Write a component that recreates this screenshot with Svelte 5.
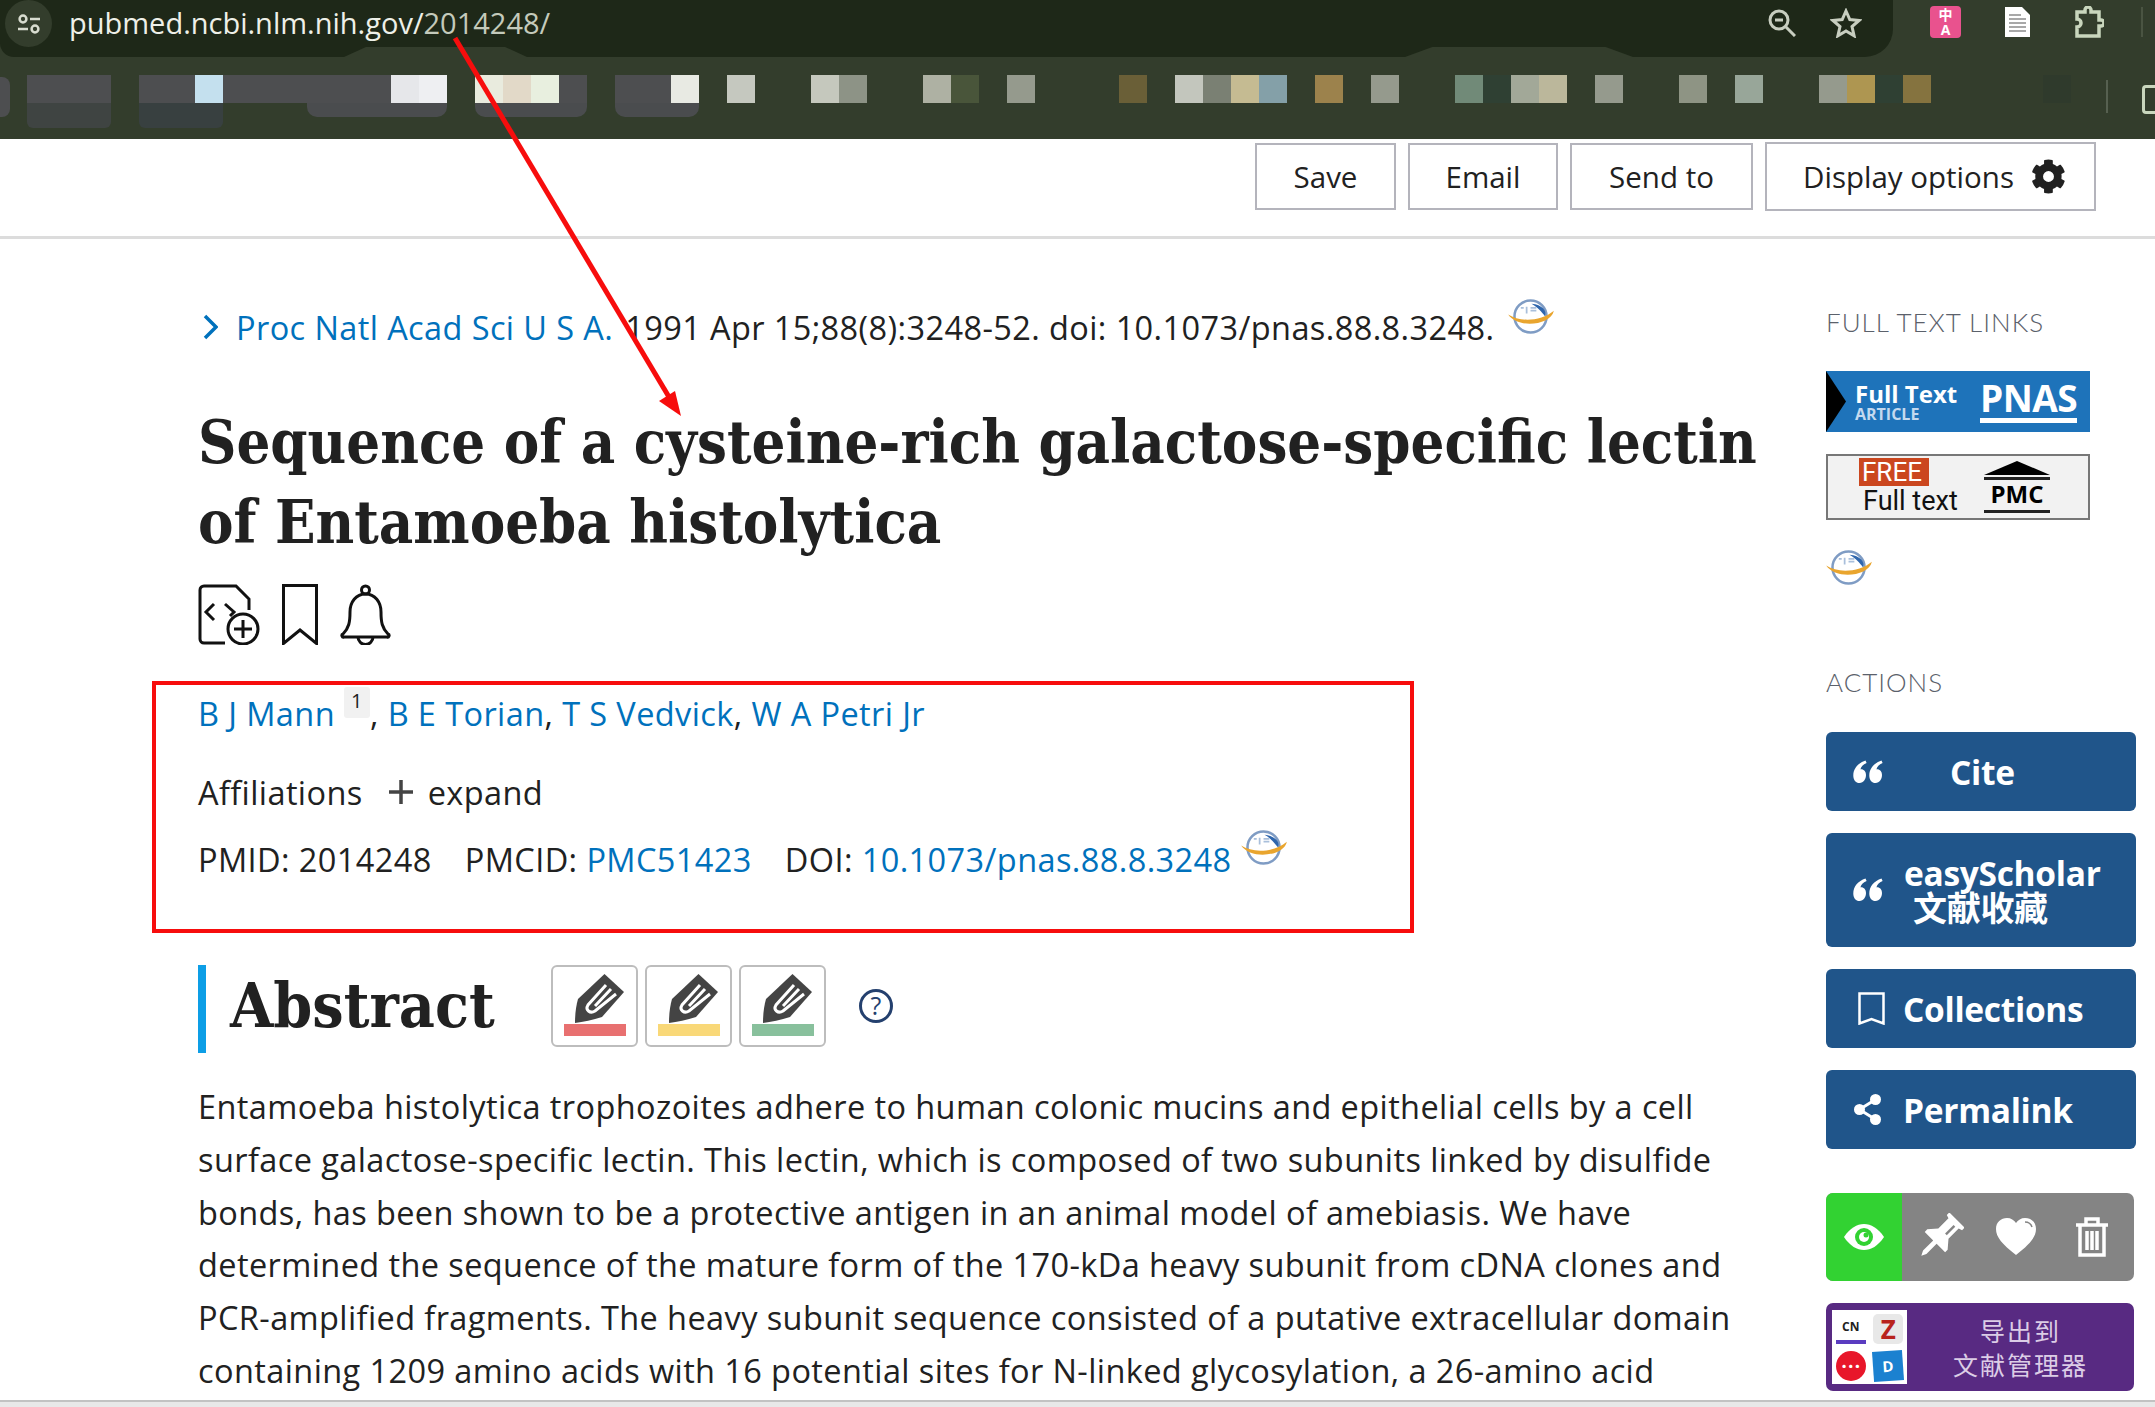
<script>
  const tiles = [
    [1,3,'#4d4e50'],[5,2,'#4d4e50'],[7,1,'#c4e0ee'],[8,6,'#4d4e50'],[14,1,'#e6e7ea'],[15,1,'#eeeff2'],
    [17,1,'#e9ebde'],[18,1,'#e2d9c8'],[19,1,'#e8efdf'],[20,1,'#4d4e50'],[22,2,'#4d4e50'],[24,1,'#e8eae3'],[26,1,'#c5c8bf'],
    [29,1,'#c5c8bd'],[30,1,'#8d9386'],[33,1,'#aeb1a3'],[34,1,'#49553a'],[36,1,'#959a8d'],
    [40,1,'#6a5f37'],[42,1,'#c3c6bd'],[43,1,'#7a8073'],[44,1,'#c5bb92'],[45,1,'#84a0a8'],[47,1,'#9c824c'],[49,1,'#959a8d'],
    [52,1,'#718a78'],[53,1,'#2f4033'],[54,1,'#a2a898'],[55,1,'#bbb79b'],[57,1,'#959a8d'],[60,1,'#8e9484'],[62,1,'#98a699'],
    [65,1,'#959a8d'],[66,1,'#ae9651'],[67,1,'#2f4033'],[68,1,'#85733f'],[73,1,'#2f3a2c']
  ];
  const dims = [[1,3,'#3f4442',2],[5,3,'#384040',2],[11,5,'#4a4c4e',1],[17,4,'#4a4c4e',1],[22,3,'#4a4c4e',1]];
  const names = [
    { text: 'B J Mann', sup: '1' }, { text: 'B E Torian' }, { text: 'T S Vedvick' }, { text: 'W A Petri Jr' }
  ];
  const lines = [
    'Entamoeba histolytica trophozoites adhere to human colonic mucins and epithelial cells by a cell',
    'surface galactose-specific lectin. This lectin, which is composed of two subunits linked by disulfide',
    'bonds, has been shown to be a protective antigen in an animal model of amebiasis. We have',
    'determined the sequence of the mature form of the 170-kDa heavy subunit from cDNA clones and',
    'PCR-amplified fragments. The heavy subunit sequence consisted of a putative extracellular domain',
    'containing 1209 amino acids with 16 potential sites for N-linked glycosylation, a 26-amino acid'
  ];
  const pens = ['#e87070', '#f9d878', '#88c09c'];
</script>

{#snippet globe()}
  <svg class="globe" viewBox="0 0 48 36" aria-hidden="true">
    <circle cx="23" cy="18" r="16.500" fill="#fff" stroke="#7f9cc4" stroke-width="2.600"/>
    <path d="M24 5 C35 6 40 12 38 18 C34 13 31 9 24 5Z" fill="#2f66ad"/>
    <path d="M13 9h3M19 8v7M23 9h6M23 12h6" stroke="#a9bfdb" stroke-width="1.800" fill="none"/>
    <path d="M0 16 C12 24 34 23 47 12 C44 27 10 31 0 16Z" fill="#e9a52e"/>
  </svg>
{/snippet}

{#snippet quote()}
  <svg class="quote" viewBox="0 0 30 24" aria-hidden="true">
    <path d="M12.500 0.500 L13.600 3 C10 4.600 8 6.600 7.400 9.400 C10.600 9 13 11.400 13 15 C13 19 10.500 23 6.600 23 C2.600 23 0.300 19.800 0.300 15.400 C0.300 8.600 5 3 12.500 0.500Z"/>
    <path d="M28.500 0.500 L29.600 3 C26 4.600 24 6.600 23.400 9.400 C26.600 9 29 11.400 29 15 C29 19 26.500 23 22.600 23 C18.600 23 16.300 19.800 16.300 15.400 C16.300 8.600 21 3 28.500 0.500Z"/>
  </svg>
{/snippet}

<div class="page">
  <header class="chrome">
    <div class="omni">
      <div class="info">
        <svg viewBox="0 0 28 28" aria-hidden="true">
          <circle cx="8" cy="9" r="3.400"/><path d="M15 9h10M3 19h10"/><circle cx="20" cy="19" r="3.400"/>
        </svg>
      </div>
      <div class="url"><span class="host">pubmed.ncbi.nlm.nih.gov/</span><span class="path">2014248/</span></div>
      <div class="omni-icons">
        <svg class="zoomi" viewBox="0 0 28 28" aria-hidden="true">
          <circle cx="11" cy="11" r="9"/><path d="M7 11h8M18 18l9 9"/>
        </svg>
        <svg class="star" viewBox="0 0 32 30" aria-hidden="true">
          <path d="M16 3l3.800 8.600 9.200.9-7 6.100 2.100 9.200-8.100-4.900-8.100 4.900 2.100-9.200-7-6.100 9.200-.9z"/>
        </svg>
      </div>
    </div>
    <div class="ext">
      <div class="pink"><span>中</span><span>A</span></div>
      <svg class="doc" viewBox="0 0 25 30" aria-hidden="true">
        <path d="M0 0h17l8 8v22H0z" fill="#fff"/>
        <path d="M4 8h12M4 12h17M4 16h17M4 20h17M4 24h17" stroke="#a8a8a8" stroke-width="2"/>
      </svg>
      <svg class="puzzle" viewBox="0 0 30 32" aria-hidden="true">
        <path d="M3 6h8V4a3 3 0 0 1 6 0v2h8v8h2a3 3 0 0 1 0 6h-2v10H3V21a4 4 0 0 0 0-8z"/>
      </svg>
      <span class="vr"></span>
    </div>
    <div class="notch one"></div>
    <div class="notch two"></div>
    <div class="tiles">
      {#each dims as t}
        <span class={t[3] === 2 ? 'dim tall' : 'dim'} style="grid-column: {t[0] + 1} / span {t[1]}; background: {t[2]}"></span>
      {/each}
      {#each tiles as t}
        <span class="tile" style="grid-column: {t[0] + 1} / span {t[1]}; background: {t[2]}"></span>
      {/each}
    </div>
    <div class="edge"></div>
    <div class="divider"></div>
    <div class="sidebtn"></div>
  </header>

  <nav class="actionsbar">
    <button class="save">Save</button>
    <button class="email">Email</button>
    <button class="send">Send to</button>
    <button class="display">Display options
      <svg class="gear" viewBox="0 0 512 512" aria-hidden="true">
        <path d="M487 316l-42-25a192 192 0 0 0 0-70l42-25c5-3 7-9 5-14a248 248 0 0 0-55-95c-4-4-10-5-15-2l-42 24a188 188 0 0 0-61-35V26c0-6-4-10-9-12a250 250 0 0 0-110 0c-5 2-9 6-9 12v48a194 194 0 0 0-61 35L88 85c-5-3-11-2-15 2a247 247 0 0 0-55 95c-2 5 0 11 5 14l42 25a192 192 0 0 0 0 70l-42 25c-5 3-7 9-5 14a248 248 0 0 0 55 95c4 4 10 5 15 2l42-24a188 188 0 0 0 61 35v48c0 6 4 10 9 12 37 8 74 8 110 0 5-2 9-6 9-12v-48a194 194 0 0 0 61-35l42 24c5 3 11 2 15-2a247 247 0 0 0 55-95c2-5 0-11-5-14zM256 336a80 80 0 1 1 0-160 80 80 0 0 1 0 160z"/>
      </svg>
    </button>
  </nav>

  <main class="layout">
    <article class="content">
      <div class="cite">
        <svg class="chev" viewBox="0 0 16 26" aria-hidden="true"><path d="M3 2l11 11L3 24"/></svg>
        <a href="#top" class="journal">Proc Natl Acad Sci U S A.</a>
        <span>1991 Apr 15;88(8):3248-52. doi: 10.1073/pnas.88.8.3248.</span>
        {@render globe()}
      </div>
      <h1>Sequence of a cysteine-rich galactose-specific lectin<br>of Entamoeba histolytica</h1>
      <div class="tools">
        <svg class="i-file" viewBox="0 0 62 61" aria-hidden="true">
          <path d="M27 59H6a4 4 0 0 1-4-4V6a4 4 0 0 1 4-4h32l13 13v11"/>
          <path d="M16 20l-8 8 8 8M27 20l9 8-4 4"/>
          <circle cx="45" cy="45" r="15"/><path d="M45 36v18M36 45h18"/>
        </svg>
        <svg class="i-mark" viewBox="0 0 36 61" aria-hidden="true"><path d="M1.500 1.500h33v58L18 46 1.500 59.500z"/></svg>
        <svg class="i-bell" viewBox="0 0 51 61" aria-hidden="true">
          <path d="M3 50c6-6 7-12 7-22 0-10 6-18 15.500-18S41 18 41 28c0 10 1 16 7 22a1.500 1.500 0 0 1-1 3H4a1.500 1.500 0 0 1-1-3z"/>
          <circle cx="25.500" cy="6" r="4"/><path d="M18 53a7.500 7.500 0 0 0 15 0"/>
        </svg>
      </div>
      <div class="authors">
        {#each names as n, i}{#if i > 0}<span class="comma">{', '}</span>{/if}<a href="#top">{n.text}</a>{#if n.sup}<sup>{n.sup}</sup>{/if}{/each}
      </div>
      <div class="row affil">
        <span>Affiliations</span>
        <svg class="plus" viewBox="0 0 24 24" aria-hidden="true"><path d="M12 0v24M0 12h24"/></svg>
        <span class="expand">expand</span>
      </div>
      <div class="row ids">
        <span>PMID: 2014248</span>
        <span>PMCID: <a href="#top">PMC51423</a></span>
        <span>DOI: <a href="#top">10.1073/pnas.88.8.3248</a></span>
        {@render globe()}
      </div>
      <div class="abstract-head">
        <h2>Abstract</h2>
        <div class="pens">
          {#each pens as c}
            <div class="pen">
              <svg viewBox="0 0 52 49" aria-hidden="true">
                <path d="M31.500 0 L51 18 L29 43 C20 46 10 48 2 49 C2 40 3 32 5 25Z" fill="#444"/>
                <path d="M33 11L15 31c-3 5 2 9 7 6L43 20M38 15L22 32" stroke="#fff" stroke-width="3" fill="none"/>
              </svg>
              <span style="background: {c}"></span>
            </div>
          {/each}
        </div>
        <div class="help">?</div>
      </div>
      <p class="body">
        {#each lines as l}{l}<br>{/each}
      </p>
    </article>

    <aside class="side">
      <div class="label first">FULL TEXT LINKS</div>
      <div class="badge pnas">
        <span class="tri"></span>
        <div class="ft"><b>Full Text</b><small>ARTICLE</small></div>
        <div class="pn">PNAS</div>
      </div>
      <div class="badge pmc">
        <div class="free"><span>FREE</span><b>Full text</b></div>
        <div class="pmclogo"><i></i><u></u><strong>PMC</strong><u></u></div>
      </div>
      <div class="sideglobe">{@render globe()}</div>
      <div class="label second">ACTIONS</div>
      <div class="buttons">
        <div class="btn">{@render quote()}<span class="cite-t">Cite</span></div>
        <div class="btn tall">{@render quote()}<span class="stack"><span>easyScholar</span><span class="cjk">文献收藏</span></span></div>
        <div class="btn">
          <svg class="b-mark" viewBox="0 0 27 33" aria-hidden="true"><path d="M1.500 1.500h24v30L13.500 27 1.500 31.500z"/></svg>
          <span>Collections</span>
        </div>
        <div class="btn">
          <svg class="b-share" viewBox="0 0 27 31" aria-hidden="true">
            <circle cx="21.500" cy="5.500" r="5.500"/><circle cx="5.500" cy="15.500" r="5.500"/><circle cx="21.500" cy="25.500" r="5.500"/>
            <path d="M21.500 5.500l-16 10 16 10" stroke="#fff" stroke-width="3" fill="none"/>
          </svg>
          <span>Permalink</span>
        </div>
      </div>
      <div class="strip">
        <div class="cell on">
          <svg viewBox="0 0 40 28" aria-hidden="true">
            <path d="M0 14C6 5 13 1 20 1s14 4 20 13c-6 9-13 13-20 13S6 23 0 14z" fill="#fff"/>
            <circle cx="20" cy="14" r="9" fill="#32d232"/><circle cx="20" cy="14" r="5" fill="#fff"/><circle cx="22" cy="12" r="2.500" fill="#32d232"/>
          </svg>
        </div>
        <div class="cell">
          <svg class="pin" viewBox="0 0 40 40" aria-hidden="true">
            <g transform="rotate(45 20 20)">
              <path d="M11 0h18v3l-3 1v12l6 7v3H22v12l-2 4-2-4V26H8v-3l6-7V4l-3-1z" fill="#fff"/>
              <path d="M22 5v10" stroke="#848484" stroke-width="2"/>
            </g>
          </svg>
        </div>
        <div class="cell">
          <svg viewBox="0 0 40 38" aria-hidden="true">
            <path d="M20 37C6 26 0 19 0 11 0 4 5 0 11 0c4 0 7 2 9 5 2-3 5-5 9-5 6 0 11 4 11 11 0 8-6 15-20 26z" fill="#fff"/>
            <path d="M29 4c3 0 6 2 7 5" stroke="#848484" stroke-width="1.500" fill="none"/>
          </svg>
        </div>
        <div class="cell">
          <svg class="bin" viewBox="0 0 34 40" aria-hidden="true">
            <path d="M1 8h32M11 7V2h12v5M5 9v29h24V9M12 14v19M17 14v19M22 14v19"/>
          </svg>
        </div>
      </div>
      <div class="export">
        <div class="logos">
          <span class="l cn">CN</span><span class="l z">Z</span>
          <span class="l red">⋯</span><span class="l blue">D</span>
        </div>
        <div class="export-t"><span>导出到</span><span>文献管理器</span></div>
      </div>
    </aside>
  </main>
  <div class="statusline"></div>

  <div class="redbox"></div>
  <svg class="arrow" viewBox="0 0 2155 1407" aria-hidden="true">
    <path d="M455 38L672 402" stroke="#f70d0d" stroke-width="5" fill="none"/>
    <path d="M681 416L659 401L675 391Z" fill="#f70d0d"/>
  </svg>
</div>

<style>
  :global(body) { margin: 0; background: #fff; }
  .page {
    position: relative;
    width: 2155px;
    height: 1407px;
    overflow: hidden;
    display: flex;
    flex-direction: column;
    font-family: "Open Sans", "Noto Sans CJK SC", sans-serif;
    font-size: 32.500px;
    letter-spacing: 0.4px;
    color: #212121;
  }
  a { color: #0071bc; text-decoration: none; }

  .chrome { position: relative; height: 139px; flex: none; background: #333d2c; letter-spacing: 0; }
  .omni {
    width: 1893px; height: 57px; background: #1e2818;
    border-radius: 0 28px 28px 14px;
    border-top-right-radius: 0;
    display: flex; align-items: flex-start;
  }
  .info { width: 47px; height: 47px; margin-left: 5px; border-radius: 50%; background: #333d2c; display: flex; align-items: center; justify-content: center; }
  .info svg { width: 28px; height: 28px; fill: none; stroke: #d8dcd0; stroke-width: 2.500; }
  .url { margin-left: 17px; line-height: 45px; font-size: 29px; }
  .host { color: #eef0e8; }
  .path { color: #c4cabb; }
  .omni-icons { margin-left: auto; display: flex; align-items: center; gap: 34px; margin-right: 31px; height: 46px; }
  .zoomi { width: 28px; height: 28px; fill: none; stroke: #c8cec0; stroke-width: 3; }
  .star { width: 32px; height: 30px; fill: none; stroke: #c8cec0; stroke-width: 3; }
  .ext { position: absolute; top: 5px; left: 1930px; width: 225px; display: flex; align-items: center; gap: 44px; height: 34px; }
  .pink { width: 31px; height: 32px; border-radius: 4px; background: #e9528e; color: #fff; font-size: 14px; line-height: 15px; display: flex; flex-direction: column; align-items: center; justify-content: center; font-weight: 700; }
  .doc { width: 25px; height: 30px; }
  .puzzle { width: 30px; height: 32px; fill: none; stroke: #c9d6bd; stroke-width: 3.500; }
  .vr { width: 2px; height: 30px; background: #4a5442; margin-left: -7px; }
  .notch { position: absolute; top: 47px; height: 10px; background: #333d2c; clip-path: polygon(0 100%, 12% 0, 88% 0, 100% 100%); }
  .notch.one { left: 344px; width: 183px; }
  .notch.two { left: 1405px; width: 228px; }
  .tiles {
    position: absolute; left: -1px; top: 75px;
    display: grid; grid-template-columns: repeat(76, 28px); grid-template-rows: 28px 14px 11px;
  }
  .tile { grid-row: 1; }
  .dim { grid-row: 1 / span 2; border-radius: 0 0 10px 10px; }
  .dim.tall { grid-row: 1 / span 3; border-radius: 0 0 6px 6px; }
  .edge { position: absolute; left: 0; top: 77px; width: 10px; height: 40px; background: #4d4e50; border-radius: 0 8px 8px 0; }
  .divider { position: absolute; left: 2106px; top: 80px; width: 2px; height: 33px; background: #566050; }
  .sidebtn { position: absolute; left: 2142px; top: 85px; width: 20px; height: 23px; border: 3px solid #c9d6bd; border-radius: 4px; }

  .actionsbar {
    height: 100px; flex: none; box-sizing: border-box;
    border-bottom: 3px solid #dcdcdc;
    display: flex; justify-content: flex-end; align-items: flex-start;
    gap: 12px; padding: 4px 59px 0 0; letter-spacing: 0;
  }
  button {
    height: 67px; box-sizing: border-box; background: #fff;
    border: 2.500px solid #b4b4bc; padding: 0;
    font: inherit; font-size: 29.500px; color: #212121;
    display: flex; align-items: center; justify-content: center; gap: 17px;
  }
  .save { width: 141px; }
  .email { width: 150px; }
  .send { width: 183px; }
  .display { width: 331px; height: 69px; margin-top: -1px; padding-left: 8px; }
  .gear { width: 35px; height: 35px; fill: #212121; }

  .layout { flex: 1; min-height: 0; display: flex; overflow: hidden; }
  .content { width: 1798px; flex: none; box-sizing: border-box; padding: 62px 0 0 198px; }
  .cite { height: 52px; display: flex; align-items: center; white-space: pre; }
  .chev { width: 16px; height: 26px; margin: 0 18px 0 4px; fill: none; stroke: #0071bc; stroke-width: 3.500; }
  .journal { margin-right: 12px; }
  .globe { width: 47px; height: 35px; flex: none; }
  .cite .globe { margin: -22px 0 0 14px; }
  h1 {
    margin: 49px 0 0; font: 700 59.200px/80px "DejaVu Serif Condensed", "DejaVu Serif", serif; color: #212121;
    white-space: nowrap; letter-spacing: 0;
  }
  .tools { margin-top: 22px; height: 61px; display: flex; gap: 22px; }
  .tools svg { height: 61px; fill: none; stroke: #111; stroke-width: 3; }
  .i-file { width: 62px; }
  .i-mark { width: 36px; }
  .i-bell { width: 51px; }
  .row { height: 52px; display: flex; align-items: center; white-space: pre; }
  .authors { margin-top: 43px; height: 52px; line-height: 52px; white-space: pre; }
  .authors sup { display: inline-block; vertical-align: top; margin: -1px 0 0 9px; width: 26px; height: 31px; background: #f1f1f1; border-radius: 3px; font-size: 20px; line-height: 28px; text-align: center; }
  .comma { color: #212121; }
  .affil { margin-top: 26px; }
  .plus { width: 24px; height: 24px; margin: 0 15px 0 26px; fill: none; stroke: #444; stroke-width: 3.500; }
  .ids { margin-top: 15px; gap: 33px; }
  .ids .globe { margin: -24px 0 0 -24px; }
  .abstract-head { margin-top: 80px; height: 88px; border-left: 8px solid #0d9ee6; padding-left: 24px; display: flex; align-items: flex-start; box-sizing: border-box; }
  h2 { margin: 0; font: 700 62px/82px "DejaVu Serif Condensed", "DejaVu Serif", serif; color: #212121; width: 321px; flex: none; letter-spacing: 0; }
  .pens { display: flex; gap: 7px; }
  .pen { width: 87px; height: 82px; box-sizing: border-box; border: 2.500px solid #bdbdbd; border-radius: 6px; display: flex; flex-direction: column; align-items: center; padding-top: 7px; }
  .pen svg { width: 52px; height: 49px; margin-left: 8px; flex: none; }
  .pen span { width: 62px; height: 12px; margin-top: 1px; flex: none; }
  .help { margin: 24px 0 0 33px; width: 34px; height: 34px; box-sizing: border-box; border: 3px solid #24406e; border-radius: 50%; color: #24406e; font-size: 25px; line-height: 27px; text-align: center; letter-spacing: 0; }
  .body { margin: 28px 0 0; line-height: 52.800px; white-space: nowrap; }

  .side { flex: 1; padding: 63px 19px 0 28px; min-width: 0; letter-spacing: 0; }
  .label { height: 40px; line-height: 40px; font-family: Lato, "Open Sans", sans-serif; font-weight: 300; font-size: 26px; color: #5b616b; letter-spacing: 1px; white-space: pre; }
  .label.second { margin-top: 78px; line-height: 38px; }
  .badge { width: 264px; box-sizing: border-box; display: flex; align-items: center; }
  .pnas { position: relative; height: 61px; margin-top: 29px; background: #1e73ba; color: #fff; padding-left: 29px; }
  .tri { position: absolute; left: 0; top: 0; width: 20px; height: 61px; background: #000; clip-path: polygon(0 0, 100% 50%, 0 100%); }
  .ft { display: flex; flex-direction: column; width: 125px; }
  .ft b { font-size: 24px; line-height: 24px; }
  .ft small { font-size: 16px; line-height: 16px; font-weight: 700; color: #c4d9ef; }
  .pn { font-size: 37px; font-weight: 700; line-height: 36px; border-bottom: 5px solid #fff; letter-spacing: -0.5px; padding-bottom: 2px; margin-top: -1px; }
  .pmc { height: 66px; margin-top: 22px; background: #f2f2f2; border: 2px solid #777; padding-left: 31px; }
  .free { width: 125px; display: flex; flex-direction: column; align-items: flex-start; font-family: Roboto, sans-serif; }
  .free span { background: #cb471f; color: #fff; font-size: 26px; line-height: 28px; padding: 0 3px; width: 70px; box-sizing: border-box; }
  .free b { font-weight: 400; font-size: 27px; line-height: 30px; color: #111; margin-left: 4px; white-space: nowrap; }
  .pmclogo { width: 66px; display: flex; flex-direction: column; align-items: stretch; }
  .pmclogo i { height: 14px; background: #000; clip-path: polygon(50% 0, 100% 100%, 0 100%); }
  .pmclogo u { height: 3px; background: #222; margin-top: 2px; display: block; }
  .pmclogo strong { font-size: 24px; line-height: 28px; text-align: center; font-weight: 700; color: #000; }
  .sideglobe { margin-top: 30px; height: 35px; display: flex; }
  .buttons { margin-top: 29px; display: flex; flex-direction: column; gap: 22px; }
  .btn { height: 79px; width: 310px; box-sizing: border-box; background: #20558a; border-radius: 6px; color: #fff; font-size: 33.500px; font-weight: 700; display: flex; align-items: center; padding-left: 27px; gap: 22px; letter-spacing: -0.3px; }
  .btn.tall { height: 114px; }
  .quote { width: 30px; height: 24px; fill: #fff; flex: none; margin-right: -1px; }
  .cite-t { margin-left: 46px; }
  .stack { display: flex; flex-direction: column; align-items: flex-start; line-height: 33px; }
  .cjk { margin-left: 9px; font-family: "Noto Sans CJK SC", sans-serif; font-size: 34px; }
  .b-mark { width: 27px; height: 33px; fill: none; stroke: #fff; stroke-width: 2.500; flex: none; margin-left: 5px; margin-right: -4px; }
  .b-share { width: 27px; height: 31px; fill: #fff; flex: none; margin-left: 1px; }
  .strip { margin-top: 44px; width: 308px; height: 88px; background: #848484; border-radius: 7px; overflow: hidden; display: flex; }
  .cell { width: 76px; height: 88px; flex: none; display: flex; align-items: center; justify-content: center; }
  .cell.on { background: #32d232; }
  .cell svg { width: 40px; height: 40px; }
  .cell svg.pin { width: 48px; height: 48px; }
  .bin { fill: none; stroke: #fff; stroke-width: 3.500; }
  .export { margin-top: 22px; width: 308px; height: 88px; background: #582a82; border-radius: 7px; box-sizing: border-box; padding: 7px 0 0 6px; display: flex; color: #dccde6; }
  .logos { width: 75px; height: 74px; background: #fff; display: grid; grid-template-columns: 1fr 1fr; grid-template-rows: 1fr 1fr; place-items: center; flex: none; }
  .l { width: 30px; height: 30px; display: flex; align-items: center; justify-content: center; font-weight: 700; }
  .cn { font-size: 12px; color: #222; border-bottom: 4px solid #5a3cc0; box-sizing: border-box; }
  .z { font-size: 26px; color: #b8231c; background: #e8e8e8; border-radius: 5px; }
  .red { background: #e8162a; color: #fff; border-radius: 50%; font-size: 20px; }
  .blue { background: #1b81d0; color: #fff; font-size: 15px; transform: rotate(-4deg); }
  .export-t { flex: 1; display: flex; flex-direction: column; align-items: center; font-family: "Noto Sans CJK SC", sans-serif; font-size: 25px; line-height: 34px; letter-spacing: 2px; margin-top: 3px; }

  .statusline { height: 7px; flex: none; box-sizing: border-box; border-top: 2px solid #c2c2c2; background: #e8e8e8; }
  .redbox { position: absolute; left: 152px; top: 681px; width: 1262px; height: 252px; box-sizing: border-box; border: 4px solid #f70d0d; }
  .arrow { position: absolute; left: 0; top: 0; width: 2155px; height: 1407px; pointer-events: none; }
</style>
